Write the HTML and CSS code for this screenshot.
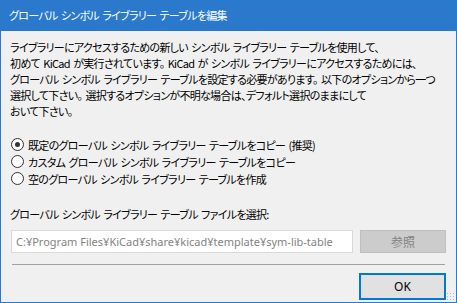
FILE: index.html
```html
<!DOCTYPE html>
<html lang="ja">
<head>
    <meta charset="UTF-8">
    <title>グローバル シンボル ライブラリー テーブルを編集</title>
    <link rel="stylesheet" href="styles.css">
</head>
<body>

    <div class="dialog">
        <div class="titlebar">グローバル シンボル ライブラリー テーブルを編集</div>

        <div class="dialog-body">
            <p class="intro">
                ライブラリーにアクセスするための新しい シンボル ライブラリー テーブルを使用して、<br>
                初めて KiCad が実行されています。 KiCad が シンボル ライブラリーにアクセスするためには、<br>
                グローバル シンボル ライブラリー テーブルを設定する必要があります。 以下のオプションから一つ<br>
                選択して下さい。 選択するオプションが不明な場合は、デフォルト選択のままにして<br>
                おいて下さい。
            </p>

            <div class="options">
                <label class="option"><span class="radio checked"></span>既定のグローバル シンボル ライブラリー テーブルをコピー (推奨)</label>
                <label class="option"><span class="radio"></span>カスタム グローバル シンボル ライブラリー テーブルをコピー</label>
                <label class="option"><span class="radio"></span>空のグローバル シンボル ライブラリー テーブルを作成</label>
            </div>

            <div class="file-label">グローバル シンボル ライブラリー テーブル ファイルを選択:</div>
            <div class="file-row">
                <div class="file-input">C:¥Program Files¥KiCad¥share¥kicad¥template¥sym-lib-table</div>
                <div class="btn btn-disabled">参照</div>
            </div>

            <div class="separator"></div>

            <div class="footer">
                <div class="btn btn-ok">OK</div>
            </div>
        </div>

        <div class="gripper"></div>
    </div>

</body>
</html>
```

FILE: styles.css
```css
html, body {
    margin: 0;
    padding: 0;
    background-color: #f0f0f0;
    overflow: hidden;
}
body {
    font-family: "Noto Sans CJK JP", "Noto Sans", sans-serif;
    font-feature-settings: "palt";
    font-size: 11px;
    letter-spacing: -0.7px;
    word-spacing: 1.5px;
    color: #000;
}
.dialog {
    position: relative;
    width: 457px;
    height: 303px;
    box-sizing: border-box;
    border: 1px solid #2b79cc;
    border-top: none;
    background-color: #f0f0f0;
}
.titlebar {
    height: 31px;
    margin: 0 -1px;
    padding-left: 9px;
    background-color: #2b79cc;
    color: #fff;
    line-height: 31px;
    white-space: nowrap;
}
.dialog-body {
    padding: 8px 10px 0 9px;
}
.intro {
    margin: 0;
    line-height: 16px;
    white-space: nowrap;
}
.options {
    margin-top: 17px;
    display: flex;
    flex-direction: column;
}
.option {
    display: flex;
    align-items: center;
    height: 17px;
    margin-left: 1px;
    white-space: nowrap;
}
.radio {
    width: 11px;
    height: 11px;
    border: 1px solid #333;
    border-radius: 50%;
    background-color: #fff;
    margin-right: 4px;
    position: relative;
    flex-shrink: 0;
}
.radio.checked::after {
    content: "";
    position: absolute;
    left: 3px;
    top: 3px;
    width: 5px;
    height: 5px;
    border-radius: 50%;
    background-color: #333;
}
.file-label {
    margin-top: 19px;
    line-height: 16px;
    white-space: nowrap;
}
.file-row {
    display: flex;
    gap: 7px;
    margin-top: 8px;
    margin-left: 1px;
}
.file-input {
    width: 342px;
    height: 23px;
    box-sizing: border-box;
    border: 1px solid #d9d9d9;
    background-color: #fff;
    color: #838383;
    padding-left: 4px;
    line-height: 21px;
    font-family: "Noto Sans", "Noto Sans CJK JP", sans-serif;
    letter-spacing: 0;
    word-spacing: 0;
    white-space: nowrap;
}
.btn {
    box-sizing: border-box;
    text-align: center;
    letter-spacing: 0;
}
.btn-disabled {
    width: 86px;
    height: 23px;
    border: 1px solid #bfbfbf;
    background-color: #cccccc;
    color: #838383;
    line-height: 21px;
    font-size: 12px;
}
.separator {
    margin: 11px 1px 0 2px;
    height: 1px;
    background-color: #a0a0a0;
}
.footer {
    display: flex;
    justify-content: flex-end;
    margin-top: 8px;
}
.btn-ok {
    width: 87px;
    height: 27px;
    border: 2px solid #0078d7;
    background-color: #e1e1e1;
    line-height: 23px;
    font-family: "Noto Sans", sans-serif;
    font-size: 12px;
}
.gripper {
    position: absolute;
    right: 1px;
    bottom: 1px;
    width: 9px;
    height: 9px;
    background-image: radial-gradient(circle, #b8b8b8 1px, transparent 1px);
    background-size: 3px 3px;
}
```
